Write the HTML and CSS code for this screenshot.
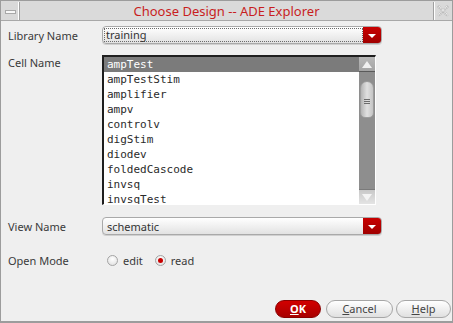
FILE: index.html
```html
<!DOCTYPE html>
<html>
<head>
<meta charset="utf-8">
<link rel="stylesheet" href="styles.css">
</head>
<body>
<div class="window">
  <div class="titlebar">
    <div class="tb-btn tb-min"><span class="min-bar"></span></div>
    <div class="title">Choose Design -- ADE Explorer</div>
    <div class="tb-btn tb-close">
      <svg width="12" height="12" viewBox="0 0 12 12">
        <path d="M1 1 L11 11 M11 1 L1 11" stroke="#bcbcbc" stroke-width="3" stroke-dasharray="1 1" fill="none"/>
        <path d="M2 1 L11 10 M10 1 L1 10" stroke="#f4f4f4" stroke-width="1" fill="none" stroke-dasharray="1 1"/>
      </svg>
    </div>
  </div>
  <div class="content">
    <div class="row row-combo">
      <div class="label">Library Name</div>
      <div class="combo">
        <div class="combo-text focused">training</div>
        <div class="combo-arrow"><span class="tri"></span></div>
      </div>
    </div>
    <div class="row row-list">
      <div class="label label-top">Cell Name</div>
      <div class="listbox">
        <div class="items">
          <div class="item sel">ampTest</div>
          <div class="item">ampTestStim</div>
          <div class="item">amplifier</div>
          <div class="item">ampv</div>
          <div class="item">controlv</div>
          <div class="item">digStim</div>
          <div class="item">diodev</div>
          <div class="item">foldedCascode</div>
          <div class="item">invsq</div>
          <div class="item">invsqTest</div>
        </div>
        <div class="scrollbar">
          <div class="sb-btn sb-up"><span class="up-tri"></span></div>
          <div class="sb-track">
            <div class="sb-thumb"><span class="grip"></span></div>
          </div>
          <div class="sb-btn sb-down"><span class="down-tri"></span></div>
        </div>
      </div>
    </div>
    <div class="row row-combo row-view">
      <div class="label">View Name</div>
      <div class="combo">
        <div class="combo-text">schematic</div>
        <div class="combo-arrow"><span class="tri"></span></div>
      </div>
    </div>
    <div class="row row-mode">
      <div class="label">Open Mode</div>
      <div class="radios">
        <span class="radio"></span><span class="rlabel">edit</span>
        <span class="radio on"></span><span class="rlabel">read</span>
      </div>
    </div>
    <div class="buttons">
      <div class="btn btn-ok"><u>O</u>K</div>
      <div class="btn btn-cancel"><u>C</u>ancel</div>
      <div class="btn btn-help"><u>H</u>elp</div>
    </div>
  </div>
</div>
</body>
</html>
```
FILE: styles.css
```css
html, body {
  margin: 0;
  padding: 0;
  background: #efefef;
}
.window {
  width: 453px;
  height: 323px;
  box-sizing: border-box;
  border: 1px solid #9c9c9c;
  border-bottom: 2px solid #9c9c9c;
  background: #efefef;
  display: flex;
  flex-direction: column;
  font-family: "Noto Sans", "Open Sans", sans-serif;
}
.titlebar {
  height: 20px;
  box-sizing: border-box;
  display: flex;
  background: #dadada;
  border-bottom: 1px solid #a8a8a8;
  padding: 1px 1px 0 1px;
  gap: 0;
}
.tb-btn {
  width: 17px;
  height: 18px;
  box-sizing: border-box;
  display: flex;
  align-items: center;
  justify-content: center;
  background: #d9d9d9;
}
.tb-min {
  border-right: 1px solid #ffffff;
  box-shadow: 1px 0 0 #a0a0a0;
  margin-right: 2px;
}
.min-bar {
  width: 9px;
  height: 2px;
  background: #f8f8f8;
  border: 1px solid #a8a8a8;
  margin-top: 1px;
}
.tb-close {
  border-left: 1px solid #ffffff;
  box-shadow: -1px 0 0 #a0a0a0;
  margin-left: 2px;
}
.title {
  flex: 1;
  text-align: center;
  color: #c81e1e;
  font-size: 13px;
  line-height: 18px;
  background: #dadada;
}
.content {
  flex: 1;
  display: flex;
  flex-direction: column;
  padding: 5px 1px 0 7px;
  font-size: 11px;
  color: #3a3a3a;
}
.row {
  display: flex;
  align-items: center;
}
.label {
  width: 94px;
  flex: none;
  font-size: 11px;
  color: #3a3a3a;
}
.label-top {
  align-self: flex-start;
  padding-top: 0px;
}
.row-list {
  margin-top: 11px;
  align-items: flex-start;
}
.row-view {
  margin-top: 12px;
}
.row-mode {
  margin-top: 18px;
}
.combo {
  width: 280px;
  height: 18px;
  box-sizing: border-box;
  display: flex;
  border: 1px solid #a9a9a9;
  border-radius: 4px;
  background: linear-gradient(#ffffff, #e2e2e2);
  overflow: hidden;
  box-shadow: 0 1px 0 #d0d0d0;
}
.combo-text {
  flex: 1;
  font-size: 11px;
  line-height: 14px;
  color: #333;
  padding-left: 2px;
  margin: 1px 0 1px 1px;
  box-sizing: border-box;
  border: 1px solid transparent;
}
.combo-text.focused {
  border: 1px dotted #6a6a6a;
  line-height: 12px;
  padding-left: 1px;
}
.combo-arrow {
  width: 18px;
  flex: none;
  background: linear-gradient(#c80000, #a00000);
  display: flex;
  align-items: center;
  justify-content: center;
}
.tri {
  width: 0;
  height: 0;
  border-left: 4px solid transparent;
  border-right: 4px solid transparent;
  border-top: 4px solid #ffffff;
  margin-top: 1px;
}
.listbox {
  width: 274px;
  height: 150px;
  box-sizing: border-box;
  border-top: 2px solid #1e1e1e;
  border-left: 2px solid #1e1e1e;
  border-right: 1px solid #ffffff;
  border-bottom: 1px solid #ffffff;
  background: #ffffff;
  display: flex;
  overflow: hidden;
}
.items {
  flex: 1;
  overflow: hidden;
  font-family: "DejaVu Sans Mono", monospace;
  font-size: 11px;
  color: #2a2a2a;
}
.item {
  height: 15px;
  line-height: 15px;
  padding-left: 3px;
  white-space: nowrap;
}
.item.sel {
  background: #7b7b7b;
  color: #ffffff;
}
.scrollbar {
  width: 16px;
  flex: none;
  display: flex;
  flex-direction: column;
  background: #8e8e8e;
}
.sb-btn {
  height: 15px;
  flex: none;
  display: flex;
  align-items: center;
  justify-content: center;
  box-sizing: border-box;
}
.sb-up {
  background: linear-gradient(#b8b8b8, #a4a4a4);
  border-bottom: 1px solid #5a5a5a;
}
.sb-down {
  background: linear-gradient(#c8c8c8, #e4e4e4);
  border-top: 1px solid #7a7a7a;
}
.up-tri {
  width: 0;
  height: 0;
  border-left: 5px solid transparent;
  border-right: 5px solid transparent;
  border-bottom: 7px solid #f0f0f0;
}
.down-tri {
  width: 0;
  height: 0;
  border-left: 5px solid transparent;
  border-right: 5px solid transparent;
  border-top: 7px solid #f4f4f4;
}
.sb-track {
  flex: 1;
  padding: 9px 1px 0 1px;
}
.sb-thumb {
  height: 37px;
  border-radius: 7px 7px 5px 5px;
  background: linear-gradient(90deg, #b4b4b4, #e0e0e0 50%, #c4c4c4);
  border: 1px solid #9c9c9c;
  box-sizing: border-box;
  display: flex;
  align-items: center;
  justify-content: center;
}
.grip {
  width: 6px;
  height: 5px;
  background: repeating-linear-gradient(#6c6c6c 0 1px, transparent 1px 2px);
  margin-top: 4px;
}
.radios {
  display: flex;
  align-items: center;
  padding-left: 5px;
}
.radio {
  width: 11px;
  height: 11px;
  box-sizing: border-box;
  border-radius: 50%;
  border: 1px solid #a4a4a4;
  background: radial-gradient(circle at 50% 35%, #ffffff, #dcdcdc);
  display: inline-flex;
  align-items: center;
  justify-content: center;
}
.radio.on::after {
  content: "";
  width: 5px;
  height: 5px;
  border-radius: 50%;
  background: #c80000;
}
.rlabel {
  margin-left: 5px;
  margin-right: 12px;
  color: #3a3a3a;
}
.buttons {
  margin-top: auto;
  margin-bottom: 3px;
  display: flex;
  justify-content: flex-end;
  gap: 3px;
  padding-right: 0;
}
.btn {
  height: 18px;
  box-sizing: border-box;
  border-radius: 9px;
  display: flex;
  align-items: center;
  justify-content: center;
  font-size: 11px;
  line-height: 16px;
}
.btn-ok {
  width: 46px;
  background: linear-gradient(#d20000, #a80000);
  border: 1px solid #8a0000;
  color: #ffffff;
  font-weight: bold;
  margin-right: 2px;
}
.btn-cancel {
  width: 67px;
  background: linear-gradient(#ffffff, #e0e0e0);
  border: 1px solid #a6a6a6;
  color: #444;
}
.btn-help {
  width: 55px;
  background: linear-gradient(#ffffff, #e0e0e0);
  border: 1px solid #a6a6a6;
  color: #444;
}
```
